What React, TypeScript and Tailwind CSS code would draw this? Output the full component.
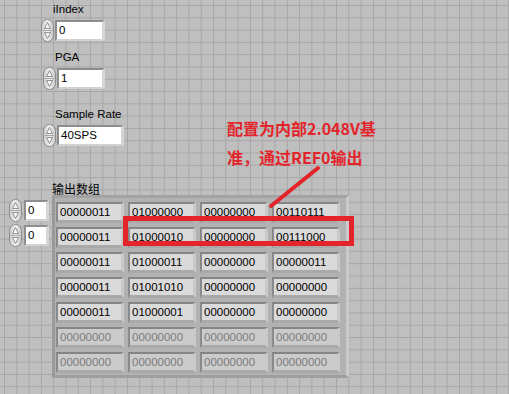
import React from "react";

const rows: string[][] = [
  ["00000011", "01000000", "00000000", "00110111"],
  ["00000011", "01000010", "00000000", "00111000"],
  ["00000011", "01000011", "00000000", "00000011"],
  ["00000011", "01001010", "00000000", "00000000"],
  ["00000011", "01000001", "00000000", "00000000"],
  ["00000000", "00000000", "00000000", "00000000"],
  ["00000000", "00000000", "00000000", "00000000"],
];
const activeRows = 5;

// LabVIEW style increment/decrement capsule
function Spinner() {
  return (
    <svg width="13" height="23" viewBox="0 0 13 23" className="shrink-0">
      <defs>
        <linearGradient id="spin" x1="0" y1="0" x2="1" y2="0">
          <stop offset="0" stopColor="#c9c9c9" />
          <stop offset="0.5" stopColor="#f2f2f2" />
          <stop offset="1" stopColor="#c4c4c4" />
        </linearGradient>
      </defs>
      <rect x="0.5" y="0.5" width="12" height="22" rx="6" fill="url(#spin)" stroke="#8c8c8c" />
      <line x1="2" y1="11.5" x2="11" y2="11.5" stroke="#a8a8a8" />
      <path d="M3.5 9.5 L6.5 3.5 L9.5 9.5 Z" fill="#f7f7f7" stroke="#7a7a7a" strokeWidth="0.8" strokeLinejoin="round" />
      <path d="M3.5 13.5 L6.5 19.5 L9.5 13.5 Z" fill="#f7f7f7" stroke="#7a7a7a" strokeWidth="0.8" strokeLinejoin="round" />
    </svg>
  );
}

function NumBox({ value, w }: { value: string; w: string }) {
  return (
    <div
      className={`${w} h-[21px] bg-white border-t-2 border-l-2 border-r-[3px] border-b-2 border-t-[#8e8e8e] border-l-[#8e8e8e] border-r-[#d6d6d6] border-b-[#d2d2d2] pl-[2px] text-[11.5px] leading-[17px] text-black`}
    >
      {value}
    </div>
  );
}

function Control({ label, value, boxW, ml, mt }: { label: string; value: string; boxW: string; ml: string; mt: string }) {
  return (
    <div className={`${ml} ${mt}`}>
      <div className="pl-[12px] h-[14px] text-[11.5px] leading-[14px] text-black">{label}</div>
      <div className="mt-[3px] flex items-center gap-[1px]">
        <Spinner />
        <NumBox value={value} w={boxW} />
      </div>
    </div>
  );
}

function Cell({ text, active }: { text: string; active: boolean }) {
  return (
    <div
      className={
        "w-[68px] h-[21px] border-t-2 border-l-2 border-r-[3px] border-b-[3px] border-t-[#858585] border-l-[#8a8a8a] border-r-[#c9c9c9] border-b-[#a9a9a9] pl-[2px] text-[11.5px] leading-[16px] " +
        (active ? "bg-[#dadada] text-black" : "bg-[#cbcbcb] text-[#7c7c7c]")
      }
    >
      {text}
    </div>
  );
}

export default function App() {
  return (
    <div className="relative w-[509px] h-[394px] overflow-hidden bg-[#bfbfbf] bg-[linear-gradient(to_right,#a6a6a6_1px,transparent_1px),linear-gradient(to_bottom,#a6a6a6_1px,transparent_1px)] bg-[size:12.3px_12.3px] bg-[position:4px_5px] font-['Liberation_Sans','Noto_Sans_CJK_SC',sans-serif]">
      <div className="pt-[2px]">
        <Control label="iIndex" value="0" boxW="w-[50px]" ml="ml-[41px]" mt="mt-0" />
        <Control label="PGA" value="1" boxW="w-[48px]" ml="ml-[43px]" mt="mt-[8px]" />
        <Control label="Sample Rate" value="40SPS" boxW="w-[67px]" ml="ml-[43px]" mt="mt-[17px]" />

        <div className="mt-[36px] ml-[52px] h-[12px] text-[12px] leading-[12px] text-black font-['Noto_Sans_CJK_SC',sans-serif]">
          输出数组
        </div>
        <div className="flex items-start">
          <div className="ml-[9px] mt-[4px] flex flex-col gap-[2px]">
            {[0, 1].map((i) => (
              <div key={i} className="flex items-center gap-[2px]">
                <Spinner />
                <NumBox value="0" w="w-[25px]" />
              </div>
            ))}
          </div>
          <div className="ml-[3px] w-[297px] h-[183px] bg-[#b2b2b2] border-t-[3px] border-l-[3px] border-r-[3px] border-b-[3px] border-t-[#a3a3a3] border-l-[#9a9a9a] border-r-[#cacaca] border-b-[#9f9f9f] pt-[4px] pl-[1px]">
            <div className="grid grid-cols-[repeat(4,68px)] gap-[4px]">
              {rows.map((r, ri) =>
                r.map((t, ci) => <Cell key={`${ri}-${ci}`} text={t} active={ri < activeRows} />)
              )}
            </div>
          </div>
        </div>
      </div>

      {/* annotation overlay */}
      <div className="absolute left-[227px] top-[114px] text-[16px] leading-[29px] font-bold text-[#e3242b] font-['Noto_Sans_CJK_SC',sans-serif] whitespace-nowrap">
        配置为内部2.048V基
        <br />
        准，通过REF0输出
      </div>
      <svg className="absolute left-0 top-0 pointer-events-none" width="509" height="394">
        <line x1="318" y1="168" x2="271" y2="206" stroke="#e3242b" strokeWidth="4" strokeLinecap="round" />
      </svg>
      <div className="absolute left-[123px] top-[216px] w-[231px] h-[30px] border-[5px] border-[#e3242b]" />
    </div>
  );
}
